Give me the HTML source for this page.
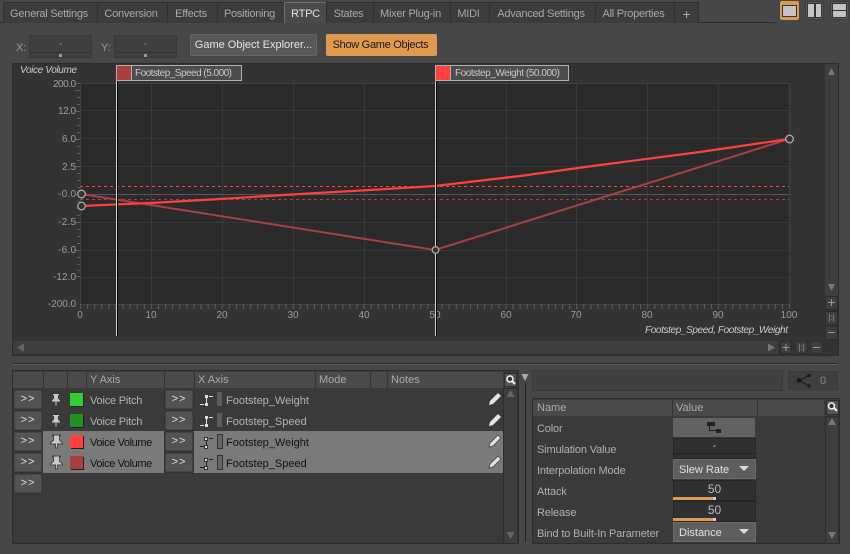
<!DOCTYPE html>
<html><head><meta charset="utf-8"><style>
html,body{margin:0;padding:0;background:#474747;}
#p{position:relative;width:850px;height:554px;overflow:hidden;background:#474747;font:11px "Liberation Sans",sans-serif;color:#b4b4b4;}
#p div{position:absolute;box-sizing:border-box;white-space:nowrap;}
.tab{top:2px;height:21px;background:#3c3c3c;border:1px solid #2f2f2f;border-bottom:0;line-height:22px;text-align:center;color:#a8a8a8;letter-spacing:-.25px;padding-right:3px;}
.b{left:14px;width:28px;height:19px;background:#535353;border:1px solid #444;box-shadow:0 0 0 1px #333;border-radius:2px;line-height:17px;text-align:center;color:#e0e0e0;font-size:11px;letter-spacing:1px;}
.s{width:13px;height:13px;box-shadow:1px 1px 0 #222;}
.t{line-height:14px;color:#b4b4b4;}
.d{color:#111;}
.hd{top:372px;height:16px;line-height:17px;color:#aaa;border-left:1px solid #333;padding-left:3px;}
.v{left:673px;width:83px;background:#303030;border:1px solid #262626;text-align:center;color:#bbb;}
.c{left:673px;width:83px;height:20px;background:#5e5e5e;border:1px solid #6a6a6a;color:#e0e0e0;line-height:20px;padding-left:5px;}
.c i{position:absolute;right:6px;top:6px;border-left:5px solid transparent;border-right:5px solid transparent;border-top:5px solid #ddd;}
.l{left:537px;color:#b0b0b0;line-height:14px;letter-spacing:-.15px;}
.m{background:#3e3e3e;border:1px solid #2b2b2b;color:#999;text-align:center;font-size:14px;line-height:11px;}
</style></head><body><div id="p">

<div style="left:0;top:22px;width:775px;height:1px;background:#2c2c2c"></div>
<div class="tab" style="left:3px;width:95px">General Settings</div>
<div class="tab" style="left:97px;width:71px">Conversion</div>
<div class="tab" style="left:167px;width:51px">Effects</div>
<div class="tab" style="left:217px;width:68px">Positioning</div>
<div class="tab" style="left:284px;width:43px;top:2px;height:21px;background:#4a4a4a;border:1px solid #6e6e6e;border-bottom:0;color:#e4e4e4;padding-right:0">RTPC</div>
<div class="tab" style="left:326px;width:48px">States</div>
<div class="tab" style="left:373px;width:78px">Mixer Plug-in</div>
<div class="tab" style="left:450px;width:40px">MIDI</div>
<div class="tab" style="left:489px;width:107px">Advanced Settings</div>
<div class="tab" style="left:595px;width:80px">All Properties</div>
<div class="tab" style="left:674px;width:25px;font-size:14px;padding-right:0">+</div>

<div style="left:780px;top:1px;width:19px;height:19px;background:#e09a50;border-radius:2px"></div>
<div style="left:782px;top:5px;width:15px;height:12px;background:#c4c4c4;border:1px solid #333"></div>
<div style="left:805px;top:1px;width:19px;height:19px;background:#5a5a5a;border:1px solid #3c3c3c;border-radius:2px"></div>
<div style="left:807px;top:3px;width:15px;height:15px;background:#333"></div>
<div style="left:808px;top:4px;width:6px;height:13px;background:#c4c4c4"></div>
<div style="left:816px;top:4px;width:5px;height:13px;background:#c4c4c4"></div>
<div style="left:830px;top:1px;width:19px;height:19px;background:#5a5a5a;border:1px solid #3c3c3c;border-radius:2px"></div>
<div style="left:832px;top:3px;width:15px;height:15px;background:#333"></div>
<div style="left:833px;top:4px;width:13px;height:6px;background:#c4c4c4"></div>
<div style="left:833px;top:11px;width:13px;height:6px;background:#c4c4c4"></div>

<div class="t" style="left:16px;top:41px;color:#999">X:</div>
<div style="left:29px;top:35px;width:63px;height:23px;background:#3f3f3f;border:1px solid #383838;text-align:center;line-height:16px;color:#888">-</div>
<div style="left:30px;top:52px;width:61px;height:1px;background:#333"></div>
<div style="left:59px;top:54px;width:3px;height:3px;background:#999"></div>
<div class="t" style="left:101px;top:41px;color:#999">Y:</div>
<div style="left:114px;top:35px;width:63px;height:23px;background:#3f3f3f;border:1px solid #383838;text-align:center;line-height:16px;color:#888">-</div>
<div style="left:115px;top:52px;width:61px;height:1px;background:#333"></div>
<div style="left:144px;top:54px;width:3px;height:3px;background:#999"></div>
<div style="left:190px;top:34px;width:127px;height:22px;background:#585858;border:1px solid #666;border-radius:2px;line-height:21px;text-align:center;color:#e4e4e4">Game Object Explorer...</div>
<div style="left:326px;top:34px;width:111px;height:22px;background:#e09a50;border-radius:2px;line-height:23px;text-align:center;color:#1a1a1a;letter-spacing:-.3px;padding-right:2px">Show Game Objects</div>

<div style="left:12px;top:63px;width:827px;height:293px;background:#333;border:1px solid #2c2c2c"></div>
<svg style="position:absolute;left:0;top:0" width="850" height="360" xmlns="http://www.w3.org/2000/svg" font-family="Liberation Sans, sans-serif" font-size="10">
<defs>
<pattern id="tx" x="80" y="304" width="7.09" height="6" patternUnits="userSpaceOnUse"><rect width="1" height="5" fill="#5c5c5c"/></pattern>
</defs>
<rect x="80" y="83" width="709" height="221" fill="#2a2a2a"/>
<path d="M80 110.500H789M80 138.500H789M80 166.500H789M80 222.500H789M80 250.500H789M80 277.500H789M151.500 83V304M222.500 83V304M293.500 83V304M364.500 83V304M506.500 83V304M576.500 83V304M647.500 83V304M718.500 83V304" stroke="#383838" fill="none"/>
<path d="M80 194.500H789" stroke="#555" fill="none"/>
<path d="M80.500 83V304M80 304.500H789M789.500 83V304M80 83.500H789" stroke="#414141" fill="none"/>
<rect x="80" y="304" width="710" height="5" fill="url(#tx)"/>
<path d="M75 83.500h5m-5 7h5m-3 7h3m-3 7h3m-5 7h5m-3 7h3m-3 7h3m-3 7h3m-5 7h5m-3 7h3m-3 7h3m-3 7h3m-5 6h5m-3 7h3m-3 7h3m-3 7h3m-5 7h5m-3 7h3m-3 7h3m-3 7h3m-5 7h5m-3 7h3m-3 7h3m-3 7h3m-5 7h5m-3 7h3m-3 7h3m-3 6h3m-5 6h5" stroke="#5c5c5c" fill="none"/>
<g fill="#9c9c9c" text-anchor="end" font-size="10">
<text x="76" y="87" textLength="23">200.0</text><text x="76" y="114" textLength="18">12.0</text><text x="76" y="142" textLength="14">6.0</text><text x="76" y="170" textLength="14">2.5</text><text x="76" y="197" textLength="18">-0.0</text><text x="76" y="225" textLength="18">-2.5</text><text x="76" y="253" textLength="18">-6.0</text><text x="76" y="280" textLength="23">-12.0</text><text x="76" y="307" textLength="28">-200.0</text>
</g>
<g fill="#9c9c9c" text-anchor="middle">
<text x="80" y="318">0</text><text x="151" y="318">10</text><text x="222" y="318">20</text><text x="293" y="318">30</text><text x="364" y="318">40</text><text x="435" y="318">50</text><text x="506" y="318">60</text><text x="576" y="318">70</text><text x="647" y="318">80</text><text x="718" y="318">90</text><text x="789" y="318">100</text>
</g>
<text x="20" y="73" fill="#ccc" font-style="italic" font-size="10" textLength="57">Voice Volume</text>
<text x="645" y="333" fill="#ccc" font-style="italic" font-size="10" textLength="143">Footstep_Speed, Footstep_Weight</text>
<path d="M80 186.500H789" stroke="#ff4040" stroke-dasharray="3 3" fill="none"/>
<path d="M80 199.500H789" stroke="#a84040" stroke-dasharray="3 3" fill="none"/>
<path d="M81 194L435 250L789 139" stroke="#a84040" stroke-width="2" fill="none"/>
<path d="M81 206L150 203L220 199L300 194L370 190L435 186L520 176L600 165L700 152L789 139" stroke="#ff4040" stroke-width="2.200" fill="none"/>
<path d="M117.500 80V336M436.500 80V336" stroke="#000" fill="none"/>
<path d="M116.500 65V336M435.500 65V336" stroke="#d0d0d0" fill="none"/>
<g fill="#333" stroke="#aaa" stroke-width="1.300">
<circle cx="81.500" cy="194" r="3.800"/><circle cx="81.500" cy="206" r="3.800"/><circle cx="435.500" cy="250" r="3.300"/><circle cx="789.500" cy="139" r="3.800"/>
</g>
<rect x="116.500" y="65.500" width="125" height="15" fill="#4c4c4c" stroke="#b0b0b0"/>
<rect x="117" y="66" width="14" height="14" fill="#a84040"/><path d="M131.500 66V80" stroke="#b0b0b0"/>
<text x="135" y="76" fill="#c8c8c8" textLength="97">Footstep_Speed (5.000)</text>
<rect x="435.500" y="65.500" width="133" height="15" fill="#4c4c4c" stroke="#b0b0b0"/>
<rect x="436" y="66" width="14" height="14" fill="#ff4040"/><path d="M450.500 66V80" stroke="#b0b0b0"/>
<text x="455" y="76" fill="#c8c8c8" textLength="105">Footstep_Weight (50.000)</text>
<rect x="825" y="64" width="13" height="232" fill="#3e3e3e"/>
<path d="M828 75l3.500-7l3.500 7z" fill="#777"/><path d="M828 284l3.500 7l3.500-7z" fill="#777"/>
<rect x="13" y="341" width="765" height="13" fill="#3e3e3e"/>
<path d="M24 343.500l-7 4l7 4z" fill="#666"/><path d="M768 343.500l7 4l-7 4z" fill="#777"/>
</svg>
<div class="m" style="left:780px;top:341px;width:12px;height:13px">+</div>
<div class="m" style="left:795px;top:341px;width:13px;height:13px;font-size:8px">|:|</div>
<div class="m" style="left:810px;top:341px;width:13px;height:13px">−</div>
<div class="m" style="left:825px;top:296px;width:13px;height:14px">+</div>
<div class="m" style="left:825px;top:311px;width:13px;height:14px;font-size:8px">|:|</div>
<div class="m" style="left:825px;top:326px;width:13px;height:14px">−</div>

<div style="left:12px;top:363px;width:826px;height:2px;background:#2c2c2c;border-bottom:1px solid #5c5c5c"></div>

<div style="left:12px;top:370px;width:507px;height:174px;background:#3a3a3a;border:1px solid #2d2d2d"></div>
<div style="left:13px;top:372px;width:490px;height:16px;background:#4a4a4a"></div>
<div class="hd" style="left:43px;width:24px"></div>
<div class="hd" style="left:67px;width:19px"></div>
<div class="hd" style="left:86px;width:78px">Y Axis</div>
<div class="hd" style="left:164px;width:30px"></div>
<div class="hd" style="left:194px;width:121px">X Axis</div>
<div class="hd" style="left:315px;width:55px">Mode</div>
<div class="hd" style="left:370px;width:17px"></div>
<div class="hd" style="left:387px;width:115px">Notes</div>

<div style="left:43px;top:431px;width:460px;height:42px;background:#7a7a7a"></div>
<div style="left:164px;top:431px;width:30px;height:42px;background:#3a3a3a"></div>
<div style="left:13px;top:431px;width:30px;height:42px;background:#3a3a3a"></div>

<div class="b" style="top:390px">&gt;&gt;</div>
<div class="b" style="top:411px">&gt;&gt;</div>
<div class="b" style="top:432px">&gt;&gt;</div>
<div class="b" style="top:453px">&gt;&gt;</div>
<div class="b" style="top:474px">&gt;&gt;</div>
<div class="b" style="top:390px;left:165px">&gt;&gt;</div>
<div class="b" style="top:411px;left:165px">&gt;&gt;</div>
<div class="b" style="top:432px;left:165px">&gt;&gt;</div>
<div class="b" style="top:453px;left:165px">&gt;&gt;</div>

<svg style="position:absolute;left:0;top:0" width="850" height="554" xmlns="http://www.w3.org/2000/svg">
<g fill="#c8c8c8">
<path d="M53 394h6v1h-1v3.500l2 2v1h-3.500v4h-1v-4H52v-1l2-2V395h-1z"/>
<path d="M53 415h6v1h-1v3.500l2 2v1h-3.500v4h-1v-4H52v-1l2-2V416h-1z"/>
<path d="M52 435h8v1h-1v4l3 3v1h-5v4h-2v-4h-5v-1l3-3v-4h-1z" stroke="#444" stroke-width="1" transform="translate(0.500 0)"/>
<path d="M52 456h8v1h-1v4l3 3v1h-5v4h-2v-4h-5v-1l3-3v-4h-1z" stroke="#444" stroke-width="1" transform="translate(0.500 0)"/>
</g>
<path d="M206.500 397v7M209 396.500h4M200 404.500h4" fill="none" stroke="#ddd"/>
<g fill="#ddd"><rect x="205" y="395" width="3" height="3"/><rect x="205" y="403" width="3" height="3"/><rect x="205" y="416" width="3" height="3"/><rect x="205" y="424" width="3" height="3"/></g>
<path d="M206.500 418v7M209 417.500h4M200 425.500h4" fill="none" stroke="#ddd"/>
<path d="M206.500 439v7M209 438.500h4M200 446.500h4M206.500 460v7M209 459.500h4M200 467.500h4" fill="none" stroke="#222"/>
<g fill="#ddd" stroke="#333"><rect x="204.500" y="437.500" width="3" height="3"/><rect x="204.500" y="445.500" width="3" height="3"/><rect x="204.500" y="458.500" width="3" height="3"/><rect x="204.500" y="466.500" width="3" height="3"/></g>
<g fill="#e4e4e4">
<path d="M489 405l1-4 8-8 3 3-8 8z"/><path d="M489 426l1-4 8-8 3 3-8 8z"/>
<path d="M489 447l1-4 8-8 3 3-8 8z" stroke="#555"/><path d="M489 468l1-4 8-8 3 3-8 8z" stroke="#555"/>
</g>
<rect x="504.500" y="373.500" width="12" height="13" fill="#555" stroke="#2d2d2d"/>
<circle cx="510" cy="379" r="3" fill="#333" stroke="#eee" stroke-width="1.600"/><path d="M512 381l3 3" stroke="#eee" stroke-width="2"/>
<rect x="503.500" y="388.500" width="14" height="155" fill="#3e3e3e" stroke="#2d2d2d"/>
<path d="M506.500 397l4-7l4 7z" fill="#666"/><path d="M506.500 532l4 7l4-7z" fill="#666"/>
<path d="M521.500 374h7l-3.500 7z" fill="#aaa"/><path d="M525.500 383V542" stroke="#222"/>
</svg>
<div style="left:217px;top:392px;width:5px;height:14px;background:#5c5c5c"></div>
<div style="left:217px;top:413px;width:5px;height:14px;background:#5c5c5c"></div>
<div style="left:217px;top:434px;width:6px;height:15px;background:#666;border:1px solid #333"></div>
<div style="left:217px;top:455px;width:6px;height:15px;background:#666;border:1px solid #333"></div>

<div class="s" style="left:70px;top:393px;background:#33cc33"></div>
<div class="s" style="left:70px;top:414px;background:#229022"></div>
<div class="s" style="left:70px;top:435px;background:#ff4040"></div>
<div class="s" style="left:70px;top:456px;background:#a84040"></div>
<div class="t" style="left:90px;top:394px;letter-spacing:-.2px">Voice Pitch</div>
<div class="t" style="left:90px;top:415px;letter-spacing:-.2px">Voice Pitch</div>
<div class="t d" style="left:90px;top:436px;letter-spacing:-.4px">Voice Volume</div>
<div class="t d" style="left:90px;top:457px;letter-spacing:-.4px">Voice Volume</div>
<div class="t" style="left:226px;top:394px">Footstep_Weight</div>
<div class="t" style="left:226px;top:415px">Footstep_Speed</div>
<div class="t d" style="left:226px;top:436px">Footstep_Weight</div>
<div class="t d" style="left:226px;top:457px">Footstep_Speed</div>

<div style="left:532px;top:370px;width:251px;height:21px;background:#414141;border:1px solid #3a3a3a"></div>
<div style="left:788px;top:371px;width:50px;height:19px;background:#3f3f3f;border:1px solid #3a3a3a;border-radius:2px;color:#888;line-height:18px;padding-left:31px">0</div>
<svg style="position:absolute;left:792px;top:372px" width="24" height="18" xmlns="http://www.w3.org/2000/svg"><circle cx="7" cy="8.500" r="2.500" fill="#1c1c1c"/><circle cx="17" cy="3.500" r="1.800" fill="#1c1c1c"/><circle cx="17" cy="14" r="1.800" fill="#1c1c1c"/><path d="M7 8.500L17 3.500M7 8.500L17 14" stroke="#1c1c1c" fill="none"/></svg>

<div style="left:532px;top:398px;width:308px;height:146px;background:#3a3a3a;border:1px solid #2d2d2d"></div>
<div style="left:533px;top:400px;width:291px;height:16px;background:#4a4a4a"></div>
<div class="hd" style="left:533px;top:400px;width:139px;padding-left:4px;border:0">Name</div>
<div class="hd" style="left:672px;top:400px;width:85px">Value</div>
<div class="hd" style="left:757px;top:400px;width:60px"></div>
<svg style="position:absolute;left:0;top:0" width="850" height="554" xmlns="http://www.w3.org/2000/svg">
<rect x="826.500" y="400.500" width="12" height="14" fill="#555" stroke="#2d2d2d"/>
<circle cx="831.500" cy="406" r="3" fill="#333" stroke="#eee" stroke-width="1.600"/><path d="M834 408l3 3" stroke="#eee" stroke-width="2"/>
<rect x="825.500" y="416.500" width="13" height="127" fill="#3e3e3e" stroke="#2d2d2d"/>
<path d="M828 425l4-7l4 7z" fill="#777"/><path d="M828 532l4 7l4-7z" fill="#777"/>
</svg>

<div class="l" style="top:422px">Color</div>
<div class="l" style="top:443px">Simulation Value</div>
<div class="l" style="top:464px">Interpolation Mode</div>
<div class="l" style="top:485px">Attack</div>
<div class="l" style="top:506px">Release</div>
<div class="l" style="top:527px">Bind to Built-In Parameter</div>

<div style="left:673px;top:418px;width:82px;height:19px;background:#626262"></div>
<svg style="position:absolute;left:706px;top:421px" width="18" height="14" xmlns="http://www.w3.org/2000/svg"><rect x="1" y="1" width="8" height="4" fill="#222"/><rect x="10" y="8" width="5" height="4" fill="#222"/><path d="M3.500 5V9.500H10" stroke="#222" fill="none"/></svg>
<div class="v" style="top:438px;height:21px;line-height:15px">-</div>
<div style="left:674px;top:453px;width:81px;height:1px;background:#222"></div>
<div class="c" style="top:459px">Slew Rate<i></i></div>
<div class="v" style="top:480px;height:21px;line-height:16px;font-size:12px">50</div>
<div style="left:673px;top:497px;width:42px;height:3px;background:#e09a50"></div>
<div style="left:713px;top:497px;width:3px;height:3px;background:#ccc"></div>
<div class="v" style="top:501px;height:21px;line-height:16px;font-size:12px">50</div>
<div style="left:673px;top:518px;width:42px;height:3px;background:#e09a50"></div>
<div style="left:713px;top:518px;width:3px;height:3px;background:#ccc"></div>
<div class="c" style="top:522px">Distance<i></i></div>

</div></body></html>
